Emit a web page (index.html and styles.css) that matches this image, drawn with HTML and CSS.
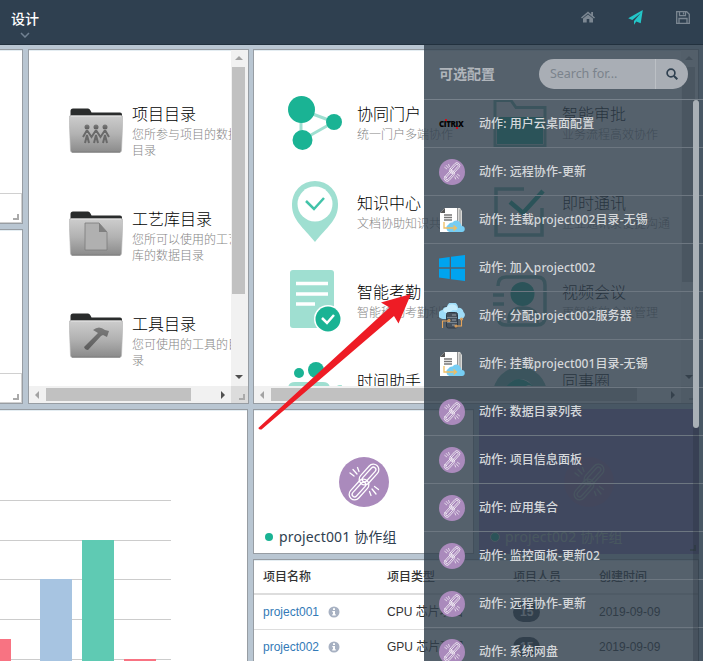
FILE: index.html
```html
<!DOCTYPE html>
<html lang="zh-CN">
<head>
<meta charset="utf-8">
<title>设计</title>
<link rel="stylesheet" href="styles.css">
</head>
<body>
<svg class="defs" aria-hidden="true">
  <defs>
    <linearGradient id="gFront" x1="0" y1="0" x2="0" y2="1"><stop offset="0" stop-color="#cdcdcd"/><stop offset=".5" stop-color="#b2b2b2"/><stop offset="1" stop-color="#8a8a8a"/></linearGradient>
    <linearGradient id="gDark" x1="0" y1="0" x2="0" y2="1"><stop offset="0" stop-color="#7b7b7b"/><stop offset="1" stop-color="#5c5c5c"/></linearGradient>
    <symbol id="folder" viewBox="0 0 54 46">
      <path d="M1.500 9V3Q1.500 .5 4 .5h15q1.500 0 2.500 2l1 2H51q2 0 2 2V11H1.500z" fill="#2a2c2c"/>
      <path d="M2 7.500h50q2 0 1.900 2l-1.400 33q-.1 2-2 2h-47q-1.900 0-2-2L.1 9.500q-.1-2 1.900-2z" fill="url(#gFront)" stroke="#b5b5b5" stroke-width=".6"/>
      <path d="M2 8.300h50" stroke="#dedede"/><path d="M3 44h48" stroke="#7f7f7f"/>
    </symbol>
    <symbol id="chain" viewBox="0 0 50 50">
      <g fill="none" stroke="currentColor" stroke-width="1.300" stroke-linecap="round">
        <g transform="rotate(-48 30 17.500)"><rect x="18" y="12" width="24" height="11" rx="5.500"/><rect x="21" y="15" width="18" height="5" rx="2.500"/></g>
        <g transform="rotate(-48 20 32.500)"><rect x="8" y="27" width="24" height="11" rx="5.500"/><rect x="11" y="30" width="18" height="5" rx="2.500"/></g>
        <path d="M11 16l4 3M14 12.500l4 4.500M18.500 10.500l1.500 4M30.500 34.500l1.500 4M33 32l4 5M35.500 29.500l4 3"/>
      </g>
    </symbol>
    <symbol id="purple" viewBox="0 0 50 50"><circle cx="25" cy="25" r="25" fill="#aa8abc"/><use href="#chain"/></symbol>
    <symbol id="docs" viewBox="0 0 26 26">
      <path d="M18 1h3l2 3v18h-5z" fill="#d8d8d6"/><path d="M18.500 1v20M21 2.500v19" stroke="#77787a" stroke-width=".7"/>
      <path d="M6 1h12v24H1V6z" fill="#fff"/><path d="M1 6l5-5v5z" fill="#555"/>
      <path d="M5 8h8M5 10.500h8M5 13h8" stroke="#777" stroke-width="1.300"/>
      <path d="M10.500 25a4 4 0 0 1-1-7.500 4 4 0 0 1 4-2 4.500 4.500 0 0 1 8 1q1 1 1 2.500a3 3 0 0 1 .5 6z" fill="#76cdf3"/>
      <path d="M5 15v6h12M14.500 18.500L17.500 21l-3 2.500" fill="none" stroke="#efbd62" stroke-width="1.300"/>
    </symbol>
    <symbol id="windows" viewBox="0 0 26 26"><path d="M0 3.500L10.700 2v10.300H0zM12 1.800L26 0v12.300H12zM0 13.700h10.700V24L0 22.500zM12 13.700h14V26l-14-1.800z" fill="#00a4ef"/></symbol>
    <symbol id="cloud" viewBox="0 0 26 26">
      <path d="M4 16a4.500 4.500 0 0 1-.5-9A4.500 4.500 0 0 1 8 4a5.500 5.500 0 0 1 11 1 4.500 4.500 0 0 1 5.500 4A4 4 0 0 1 22 16z" fill="#9edcf8"/><path d="M8 4a6 6 0 0 1 10 0q2 4-4 3-5 4-9 2-2-3 3-5z" fill="#c5ecfc"/>
      <rect x="7.500" y="9.500" width="11" height="15.500" rx="2" fill="#46515d" stroke="#303b47"/><path d="M8 14.500h10M8 19.500h10" stroke="#77838e"/><path d="M13 12h4M13 17h4M13 22h3" stroke="#aab2ba" stroke-width=".8"/>
      <g fill="none" stroke="#e5a45b" stroke-width="1.100"><path d="M3.500 25v-7H9M22.500 17v6H18"/><circle cx="10" cy="17.500" r="1"/><circle cx="22.500" cy="16" r="1"/><circle cx="17" cy="23" r="1"/></g>
    </symbol>
    <symbol id="info" viewBox="0 0 12 12"><circle cx="6" cy="6" r="5.500" fill="#a7b1c2"/><path d="M5 2.200h2v1.700H5zM4.300 5H7v3.300h.8v1.200H4.200V8.300H5V6.200h-.7z" fill="#fff"/></symbol>
  </defs>
</svg>

<header class="topbar">
  <div class="menu"><span>设计</span><svg width="10" height="6" viewBox="0 0 10 6"><path d="M1 1l4 4 4-4" fill="none" stroke="#718192" stroke-width="1.500"/></svg></div>
  <nav class="tools">
    <svg width="14" height="12" viewBox="0 0 14 12"><path d="M7 .5L0 6.500l1 1L7 2.600l6 4.900 1-1-2-1.800V1h-1.800v2.200zM2 7.600V11.500h3.700V8h2.600v3.500H12V7.600L7 3.600z" fill="#7c8792"/></svg>
    <svg width="15" height="15" viewBox="0 0 15 15"><path d="M14.800 0L12.700 13.300 8.300 11.500 6 14.800V10.900L12.800 3 4.300 9.900.2 8.300z" fill="#23c6c8"/></svg>
    <svg width="14" height="13" viewBox="0 0 14 13"><path d="M.7.700h10l2.600 2.500v9.100H.7zM3.500.7v4h6v-4M3 12V7.500h8V12M7.500 1.500v2" fill="none" stroke="#7c8792" stroke-width="1.300"/></svg>
  </nav>
</header>

<main class="board">
  <section class="left">
    <div class="upper">
      <div class="stubs">
        <div class="panel stub"><div class="grip-box"><i class="grip"></i></div></div>
        <div class="panel stub"><div class="grip-box"><i class="grip"></i></div></div>
      </div>
      <div class="panel scroller">
        <div class="view catalog">
          <div class="entry"><svg class="fold" viewBox="0 0 54 46"><use href="#folder"/><g fill="url(#gDark)"><circle cx="18" cy="19" r="2.500"/><circle cx="27" cy="19" r="2.500"/><circle cx="36" cy="19" r="2.500"/></g><path d="M14 29l3.500-6h1l4 6 4-6h1l4 6 4-6h1l3.500 6M16 35l2-8 2 8M25 35l2-8 2 8M34 35l2-8 2 8" fill="none" stroke="#696969" stroke-width="2"/></svg><div><h3>项目目录</h3><p>您所参与项目的数据<br>目录</p></div></div>
          <div class="entry"><svg class="fold second" viewBox="0 0 54 46"><use href="#folder"/><path d="M16 12h14l8 9v18H16z" fill="#b0b0b0" stroke="#7c7c7c" stroke-width=".8"/><path d="M30 12v9h8z" fill="#808080"/></svg><div><h3>工艺库目录</h3><p>您所可以使用的工艺<br>库的数据目录</p></div></div>
          <div class="entry"><svg class="fold third" viewBox="0 0 54 46"><use href="#folder"/><path d="M15 34L29 20l-5-3q6-5 12 0l4 1-2 6-4-2-2 1-13 14q-3 0-4-3z" fill="url(#gDark)"/></svg><div><h3>工具目录</h3><p>您可使用的工具的目<br>录</p></div></div>
        </div>
        <div class="vbar"><i class="up"></i><b class="thumb t1"></b><i class="down"></i></div>
        <div class="hbar"><i class="lt"></i><b class="thumb w1"></b><i class="rt"></i></div>
        <div class="corner"><i class="grip"></i></div>
      </div>
    </div>
    <div class="panel chart">
      <svg width="246" height="251" viewBox="0 410 246 251">
        <path d="M0 500.500h171M0 540.500h171M0 579.500h171M0 619.500h171M0 659.500h171" stroke="#ccc"/>
        <path d="M0 639h11v22H0zM124 659h32v2h-32z" fill="#f87382"/><path d="M40 579h32v82H40z" fill="#a7c4e1"/><path d="M82 540h32v121H82z" fill="#5fcab3"/>
      </svg>
    </div>
  </section>

  <section class="right">
    <div class="panel scroller wide">
      <div class="view apps">
        <div class="app"><svg class="pic" viewBox="0 0 54 54"><path d="M13 14v30M14 14l32 12M14 44l32-18" stroke="#9fdfd1" stroke-width="3"/><g fill="#1ab394"><circle cx="13.500" cy="13.500" r="13.500"/><circle cx="46" cy="26" r="8"/><circle cx="14.500" cy="44" r="10"/></g></svg><div><h3>协同门户</h3><p>统一门户多端协作</p></div></div>
        <div class="app"><svg class="pic" viewBox="0 0 54 54"><rect x="4" y="21" width="46" height="27" fill="#1ab394"/><path d="M2 50V4.500h16l5 7h29V50z" fill="none" stroke="#6fb8aa" stroke-width="3"/></svg><div><h3>智能审批</h3><p>业务流程高效协作</p></div></div>
        <div class="app"><svg class="pic tall" viewBox="0 0 54 62"><path d="M27 0a23 23 0 0 1 23 24c0 15-11 22-23 37C15 46 4 39 4 24A23 23 0 0 1 27 0z" fill="#9fdfd1"/><circle cx="27" cy="23" r="17.500" fill="#fff"/><path d="M18 20l8 8 10-11" fill="none" stroke="#42c3a9" stroke-width="2.500"/></svg><div><h3>知识中心</h3><p>文档协助知识共享</p></div></div>
        <div class="app"><svg class="pic" viewBox="0 0 54 54"><path d="M31 4H3v46h46V23" fill="none" stroke="#6fb8aa" stroke-width="3.500"/><path d="M17 17l13 11L50 6" fill="none" stroke="#1ab394" stroke-width="4.500"/></svg><div><h3>即时通讯</h3><p>企业通讯录便捷沟通</p></div></div>
        <div class="app"><svg class="pic tall" viewBox="0 0 54 62"><rect x="2" width="44" height="58" rx="3" fill="#9fdfd1"/><path d="M8 13.500h32M8 24h32M8 34h19" stroke="#fff" stroke-width="3.500"/><circle cx="40" cy="49" r="14" fill="#fff"/><circle cx="40" cy="49" r="12.500" fill="#1ab394"/><path d="M34 48l5 5 7-8" fill="none" stroke="#fff" stroke-width="2.500"/></svg><div><h3>智能考勤</h3><p>智能移动考勤利器</p></div></div>
        <div class="app"><svg class="pic" viewBox="0 0 54 54"><path d="M5 12q0-9 8-9h31q8 0 8 8v32q0 8-8 8H13q-8 0-8-8M0 21h11M0 30h11M16 49V44q1-10 14-10t14 10v5" fill="none" stroke="#6fb8aa" stroke-width="3.500"/><circle cx="29.500" cy="20" r="12" fill="#1ab394"/></svg><div><h3>视频会议</h3><p>更智能的会议管理</p></div></div>
        <div class="app"><svg class="pic tall" viewBox="0 0 54 62"><circle cx="11" cy="14" r="5" fill="#1ab394"/><circle cx="28" cy="11" r="8" fill="#1ab394"/><path d="M2 60V30q0-5 5-5h28q5 0 5 5" fill="none" stroke="#9fdfd1" stroke-width="4"/><circle cx="52" cy="30" r="4" fill="#9fdfd1"/></svg><div><h3>时间助手</h3><p>时间管理助手</p></div></div>
        <div class="app"><svg class="pic" viewBox="0 0 54 54"><circle cx="27" cy="31" r="27" fill="#6fb8aa"/><circle cx="27" cy="30" r="14" fill="#fff"/><path d="M13 24q12-16 28 0-8-5-14 5z" fill="#1ab394"/></svg><div><h3>同事圈</h3><p>同事分享圈</p></div></div>
      </div>
      <div class="vbar"><i class="up"></i><b class="thumb t2"></b><i class="down"></i></div>
      <div class="hbar"><i class="lt"></i><b class="thumb w2"></b><i class="rt"></i></div>
      <div class="corner"><i class="grip"></i></div>
    </div>
    <div class="groups">
      <div class="panel group"><svg class="badge" viewBox="0 0 50 50"><use href="#purple"/></svg><div class="gname"><i class="dot"></i>project001 协作组</div></div>
      <div class="panel group active"><svg class="badge" viewBox="0 0 50 50"><circle cx="25" cy="25" r="25" fill="#9a70a8"/><use href="#chain"/></svg><div class="gname"><i class="dot"></i>project002 协作组</div><i class="grip"></i></div>
    </div>
    <div class="panel tablebox">
      <table>
        <thead><tr><th class="c1">项目名称</th><th class="c2">项目类型</th><th class="c3">项目人员</th><th>创建时间</th></tr></thead>
        <tbody>
          <tr><td><a>project001</a><svg class="info"><use href="#info"/></svg></td><td>CPU 芯片项目</td><td><span class="count">15</span></td><td>2019-09-09</td></tr>
          <tr><td><a>project002</a><svg class="info"><use href="#info"/></svg></td><td>GPU 芯片项目</td><td><span class="count">15</span></td><td>2019-09-09</td></tr>
        </tbody>
      </table>
    </div>
  </section>
</main>

<aside class="drawer">
  <div class="dhead"><h2>可选配置</h2><div class="search"><span>Search for...</span><div class="go"><svg width="12" height="12" viewBox="0 0 12 12"><circle cx="5" cy="5" r="3.900" fill="none" stroke="#2f4050" stroke-width="1.700"/><path d="M8 8l3.300 3.300" stroke="#2f4050" stroke-width="2"/></svg></div></div></div>
  <ul>
    <li><span class="citrix">CITRIX</span>动作: 用户云桌面配置</li>
    <li><svg><use href="#purple"/></svg>动作: 远程协作-更新</li>
    <li><svg><use href="#docs"/></svg>动作: 挂载project002目录-无锡</li>
    <li><svg><use href="#windows"/></svg>动作: 加入project002</li>
    <li><svg><use href="#cloud"/></svg>动作: 分配project002服务器</li>
    <li><svg><use href="#docs"/></svg>动作: 挂载project001目录-无锡</li>
    <li><svg><use href="#purple"/></svg>动作: 数据目录列表</li>
    <li><svg><use href="#purple"/></svg>动作: 项目信息面板</li>
    <li><svg><use href="#purple"/></svg>动作: 应用集合</li>
    <li><svg><use href="#purple"/></svg>动作: 监控面板-更新02</li>
    <li><svg><use href="#purple"/></svg>动作: 远程协作-更新</li>
    <li><svg><use href="#purple"/></svg>动作: 系统网盘</li>
  </ul>
  <div class="track"><b></b></div>
</aside>

<svg class="arrow" width="160" height="140" viewBox="255 292 160 140"><path d="M411 294L398.500 323.500 394 316 261.500 429.500Q259 430 258.300 428L389.500 307.500 381 302.500z" fill="#ee1c25"/></svg>
</body>
</html>
```
FILE: styles.css
```css
* { box-sizing: border-box; }
body { margin: 0; width: 703px; height: 661px; overflow: hidden; position: relative; background: #b9c6d2; font: 12px/16px "Noto Sans", "Noto Sans CJK SC", sans-serif; color: #333; }
h2, h3, p, ul { margin: 0; padding: 0; }
svg { display: block; flex: none; }
.defs { position: absolute; width: 0; height: 0; }

.topbar { height: 45px; background: #2f4050; border-bottom: 1px solid #22313e; display: flex; justify-content: space-between; padding: 0 13px 0 11px; }
.menu { width: 28px; padding-top: 9px; display: flex; flex-direction: column; align-items: center; color: #fff; font-size: 14px; line-height: 20px; font-weight: 500; white-space: nowrap; }
.menu svg { margin-top: 3px; }
.tools { display: flex; gap: 33px; height: 34px; align-items: center; }

.board { display: flex; gap: 5px; height: 616px; padding-top: 4px; overflow: hidden; background: #b9c6d2; }
.panel { background: #fff; border: 1px solid #979da3; box-shadow: inset 0 1px #e4edf2; }
.left { width: 248px; display: flex; flex-direction: column; gap: 5px; }
.upper { display: flex; gap: 5px; height: 355px; }
.stubs { width: 23px; display: flex; flex-direction: column; gap: 5px; }
.stub { flex: 1; border-left: 0; display: flex; align-items: flex-end; }
.grip-box { width: 22px; height: 30px; border: solid #d0d0d0; border-width: 1px 1px 1px 0; display: flex; justify-content: flex-end; align-items: flex-end; padding: 2px; }
.grip { display: block; width: 6px; height: 6px; border: solid #aaa; border-width: 0 2px 2px 0; }

.scroller { width: 221px; flex: none; display: grid; grid-template: 1fr 17px / 1fr 17px; height: 355px; overflow: hidden; }
.wide { width: 446px; }
.view { overflow: hidden; min-width: 0; min-height: 0; }
.catalog { padding: 53px 0 0 40px; }
.entry { height: 105px; display: flex; gap: 9px; white-space: nowrap; }
.fold { width: 54px; height: 46px; margin-top: 5px; }
.fold.second { margin-top: 3px; }
.fold.third { margin-top: 0; }
h3 { font-size: 16px; line-height: 22px; font-weight: 300; color: #000; }
p { color: #858585; font-weight: 300; line-height: 16px; padding-top: 2px; }
.apps { display: grid; grid-template-columns: 205px 205px; grid-auto-rows: 89px; padding: 45px 0 0 34px; }
.app { display: flex; gap: 15px; white-space: nowrap; }
.app > div { padding-top: 8px; }
.pic { width: 54px; height: 54px; margin-top: 1px; }
.pic.tall { height: 62px; margin-top: -3px; }

.vbar { background: #f1f1f1; display: flex; flex-direction: column; align-items: center; padding: 6px 2px 7px 0; }
.hbar { background: #f1f1f1; display: flex; align-items: center; padding: 0 6px; }
.corner { background: #dcdcdc; display: flex; justify-content: flex-end; align-items: flex-end; padding: 3px; }
.thumb { background: #c1c1c1; display: block; }
.t1 { width: 13px; height: 227px; margin: 7px 0 auto; }
.t2 { width: 13px; height: 215px; margin: 7px 0 auto; }
.w1 { height: 13px; width: 145px; margin: 0 auto 0 7px; }
.w2 { height: 13px; width: 366px; margin: 0 auto 0 7px; }
.up, .down { border: 4px solid transparent; border-top-width: 0; border-bottom: 4px solid #a3a3a3; }
.down { border-bottom-width: 0; border-top: 4px solid #505050; }
.lt, .rt { border: 4px solid transparent; border-left-width: 0; border-right: 4px solid #a3a3a3; }
.rt { border-right-width: 0; border-left: 4px solid #505050; }

.chart { height: 260px; border-left: 0; flex: none; }

.right { width: 446px; flex: none; display: flex; flex-direction: column; gap: 5px; }
.groups { display: flex; gap: 5px; height: 145px; flex: none; }
.group { width: 221px; position: relative; display: flex; flex-direction: column; align-items: center; padding-top: 47px; color: #fff; }
.group.active { width: 220px; background: #8c74b7; border-color: #8c74b7; box-shadow: none; color: #b3b8b8; }
.group .grip { position: absolute; right: 2px; bottom: 2px; border-color: #555; }
.badge { width: 50px; height: 50px; }
.gname { align-self: stretch; display: flex; align-items: center; gap: 6px; padding-left: 11px; margin-top: 20px; font-size: 14px; line-height: 20px; color: #2f4050; white-space: nowrap; letter-spacing: .15px; }
.active .gname { color: #b9c9b9; }
.dot { width: 8px; height: 8px; border-radius: 50%; background: #1ab394; }
.active .dot { width: 10px; height: 10px; margin: 0 -1px; border: 1px solid #b9c9b9; }
.tablebox { height: 130px; flex: none; overflow: hidden; }
table { width: 444px; border-collapse: collapse; table-layout: fixed; font-family: "Liberation Sans", "Noto Sans CJK SC", sans-serif; }
th, td { padding: 0 0 0 9px; height: 35px; text-align: left; white-space: nowrap; border-bottom: 1px solid #ddd; }
th { height: 34px; font-weight: 500; border-bottom: 2px solid #ddd; }
.c1 { width: 124px; } .c2 { width: 126px; } .c3 { width: 86px; }
a { color: #337ab7; }
.info { display: inline-block; width: 12px; height: 12px; margin-left: 9px; vertical-align: -2px; }
.count { display: inline-block; background: #3b4550; color: #fff; font-weight: 700; padding: 2px 7px; border-radius: 10px; }

.drawer { position: absolute; left: 424px; top: 45px; width: 279px; height: 616px; overflow: hidden; background: rgba(47, 62, 76, .82); color: #d5d8db; }
.dhead { height: 55px; border-bottom: 1px solid #77818b; display: flex; justify-content: space-between; align-items: center; padding: 4px 15px 0; }
h2 { font-size: 14px; line-height: 20px; color: #b0b5bb; font-weight: 700; }
.search { width: 149px; height: 30px; border-radius: 15px; background: #a9aeb5; display: flex; align-items: center; padding-left: 11px; overflow: hidden; }
.search span { flex: 1; font-size: 12.5px; letter-spacing: -.05px; color: #7b838c; }
.go { width: 33px; height: 30px; border-left: 1px solid #bcc0c5; display: flex; align-items: center; justify-content: center; }
ul { list-style: none; }
li { height: 48px; border-bottom: 1px solid #6d7781; display: flex; align-items: center; gap: 14px; padding-left: 15px; white-space: nowrap; font-weight: 500; letter-spacing: .08px; }
li svg { width: 26px; height: 26px; color: #fff; }
.citrix { width: 26px; font: 800 8px/10px "Open Sans", sans-serif; letter-spacing: -.4px; color: #050505; position: relative; }
.citrix::before, .citrix::after { content: ""; position: absolute; width: 2px; height: 2px; background: #d0101a; left: 6px; top: 0; }
.citrix::after { left: 17px; top: 8px; }
.track { position: absolute; top: 55px; left: 269px; width: 6px; height: 561px; background: rgba(30, 40, 50, .25); }
.track b { display: block; height: 328px; border-radius: 3px; background: #a9b0b6; }
.arrow { position: absolute; left: 255px; top: 292px; }
```
